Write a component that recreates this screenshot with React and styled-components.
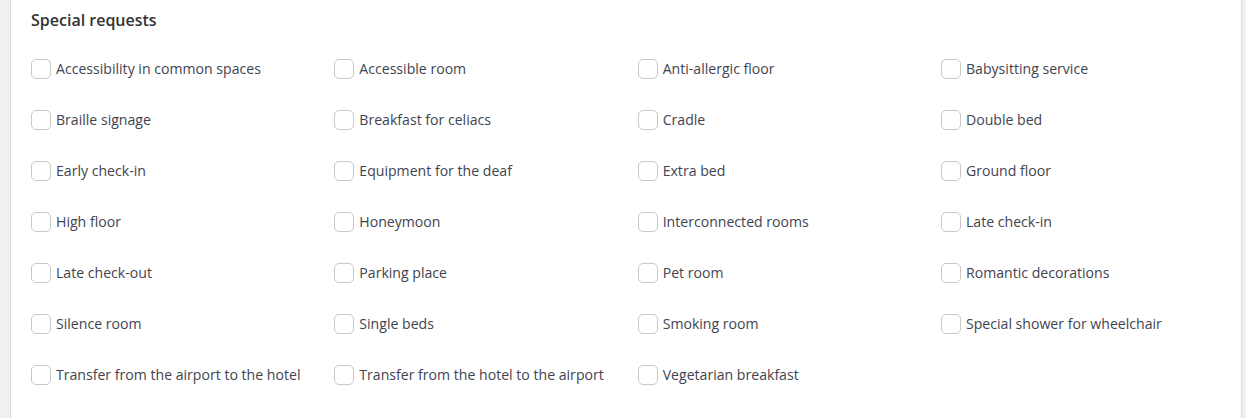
import React from 'react';
import styled, { createGlobalStyle } from 'styled-components';

const GlobalStyle = createGlobalStyle`
  html, body {
    margin: 0;
    padding: 0;
    background: #f0f0f0;
    font-family: "Open Sans", "Liberation Sans", sans-serif;
  }
`;

const requests = [
  'Accessibility in common spaces', 'Accessible room', 'Anti-allergic floor', 'Babysitting service',
  'Braille signage', 'Breakfast for celiacs', 'Cradle', 'Double bed',
  'Early check-in', 'Equipment for the deaf', 'Extra bed', 'Ground floor',
  'High floor', 'Honeymoon', 'Interconnected rooms', 'Late check-in',
  'Late check-out', 'Parking place', 'Pet room', 'Romantic decorations',
  'Silence room', 'Single beds', 'Smoking room', 'Special shower for wheelchair',
  'Transfer from the airport to the hotel', 'Transfer from the hotel to the airport', 'Vegetarian breakfast',
];

const Page = styled.div`
  padding: 0 4px 0 10px;
  min-height: 418px;
  box-sizing: border-box;
  display: flex;
`;

const Card = styled.section`
  flex: 1;
  background: #fff;
  border-left: 1px solid #d9d9d9;
  border-right: 1px solid #d9d9d9;
  padding: 10px 20px 20px 20px;
`;

const Title = styled.h3`
  margin: 0;
  font-size: 16px;
  font-weight: 600;
  color: #333;
  line-height: 20px;
`;

const Grid = styled.div`
  display: grid;
  grid-template-columns: repeat(4, 280px);
  column-gap: 23.33px;
  row-gap: 31px;
  margin-top: 29px;
`;

const Option = styled.label`
  display: flex;
  align-items: center;
  gap: 5px;
  height: 20px;
  font-size: 14.1px;
  line-height: 18px;
  color: #3f4450;
  cursor: pointer;
  white-space: nowrap;
`;

const Text = styled.span`
  margin-top: -1px;
`;

const Box = styled.input.attrs({ type: 'checkbox' })`
  appearance: none;
  margin: 0;
  width: 20px;
  height: 20px;
  border: 1px solid #c8c8c8;
  border-radius: 5px;
  background: #fff;
  box-sizing: border-box;
  flex-shrink: 0;
  cursor: pointer;
  &:checked {
    background: #3b82f6;
    border-color: #3b82f6;
  }
`;

export default function App() {
  return (
    <>
      <GlobalStyle />
      <Page>
        <Card>
          <Title>Special requests</Title>
          <Grid>
            {requests.map((r) => (
              <Option key={r}>
                <Box />
                <Text>{r}</Text>
              </Option>
            ))}
          </Grid>
        </Card>
      </Page>
    </>
  );
}
